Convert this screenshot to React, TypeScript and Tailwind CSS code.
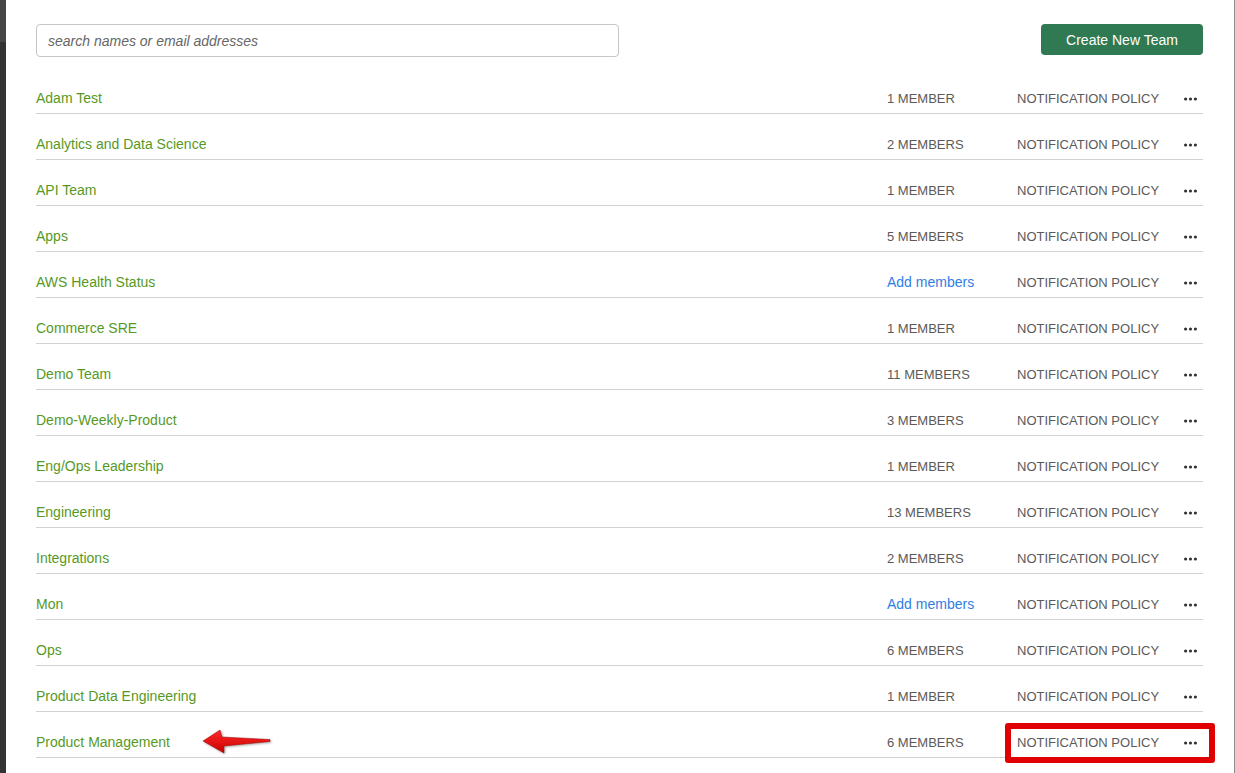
import React from "react";

interface Team {
  name: string;
  members: number;
}

const teams: Team[] = [
  { name: "Adam Test", members: 1 },
  { name: "Analytics and Data Science", members: 2 },
  { name: "API Team", members: 1 },
  { name: "Apps", members: 5 },
  { name: "AWS Health Status", members: 0 },
  { name: "Commerce SRE", members: 1 },
  { name: "Demo Team", members: 11 },
  { name: "Demo-Weekly-Product", members: 3 },
  { name: "Eng/Ops Leadership", members: 1 },
  { name: "Engineering", members: 13 },
  { name: "Integrations", members: 2 },
  { name: "Mon", members: 0 },
  { name: "Ops", members: 6 },
  { name: "Product Data Engineering", members: 1 },
  { name: "Product Management", members: 6 },
];

const Dots = () => (
  <svg width="13" height="4" viewBox="0 0 13 4" className="block">
    <circle cx="1.6" cy="2" r="1.6" fill="#333" />
    <circle cx="6.5" cy="2" r="1.6" fill="#333" />
    <circle cx="11.4" cy="2" r="1.6" fill="#333" />
  </svg>
);

const TeamRow = ({ team }: { team: Team }) => (
  <div className="flex items-center h-[46px] pt-[15px] border-b border-[#d2d2d2]">
    <span className="flex-1 text-[14px] text-[#57991f] leading-none">{team.name}</span>
    <span className="w-[130px] leading-none">
      {team.members === 0 ? (
        <span className="text-[14px] text-[#2f7ee3]">Add members</span>
      ) : (
        <span className="text-[13px] text-[#5a5a5a] uppercase">
          {team.members} {team.members === 1 ? "Member" : "Members"}
        </span>
      )}
    </span>
    <span className="w-[167px] text-[13px] text-[#5a5a5a] leading-none">NOTIFICATION POLICY</span>
    <span className="w-[13px] mr-[6px] mt-[2px]">
      <Dots />
    </span>
  </div>
);

export default function App() {
  return (
    <div
      className="relative flex min-h-screen w-[1235px] bg-white"
      style={{ fontFamily: '"Liberation Sans", Arial, sans-serif' }}
    >
      <div className="w-[6px] flex flex-col">
        <div className="h-[42px] bg-[#464646]" />
        <div className="flex-1 bg-[#333333]" />
      </div>

      <main className="flex-1 pl-[30px] pr-[31px] pt-[24px]">
        <div className="flex items-start justify-between">
          <input
            placeholder="search names or email addresses"
            className="w-[583px] h-[33px] rounded-[4px] border border-[#c6c6c6] pl-[11px] text-[14px] italic placeholder:text-[#666] outline-none"
          />
          <button className="w-[162px] h-[31px] pt-[2px] rounded-[4px] bg-[#2f7a53] text-white text-[14px] font-medium">
            Create New Team
          </button>
        </div>

        <div className="mt-[11px]">
          {teams.map(t => (
            <TeamRow team={t} key={t.name} />
          ))}
        </div>
      </main>

      <div className="w-px bg-[#8c8c8c]" />

      {/* annotations */}
      <svg
        className="absolute left-[200px] top-[728px]"
        width="74"
        height="30"
        viewBox="0 0 74 30"
      >
        <defs>
          <linearGradient id="arr" x1="0" y1="0" x2="0" y2="1">
            <stop offset="0" stopColor="#ff2a2a" />
            <stop offset="1" stopColor="#c80000" />
          </linearGradient>
        </defs>
        <polygon
          points="3,13 20,2 22,9 70,11.5 70,13.5 24,18 24,25"
          fill="url(#arr)"
          stroke="#a00000"
          strokeWidth="0.5"
          style={{ filter: "drop-shadow(1px 1px 1px rgba(0,0,0,0.35))" }}
        />
      </svg>
      <div className="absolute left-[1005px] top-[723px] w-[210px] h-[40px] border-[6px] border-[#e00000] rounded-[3px]" />
    </div>
  );
}
